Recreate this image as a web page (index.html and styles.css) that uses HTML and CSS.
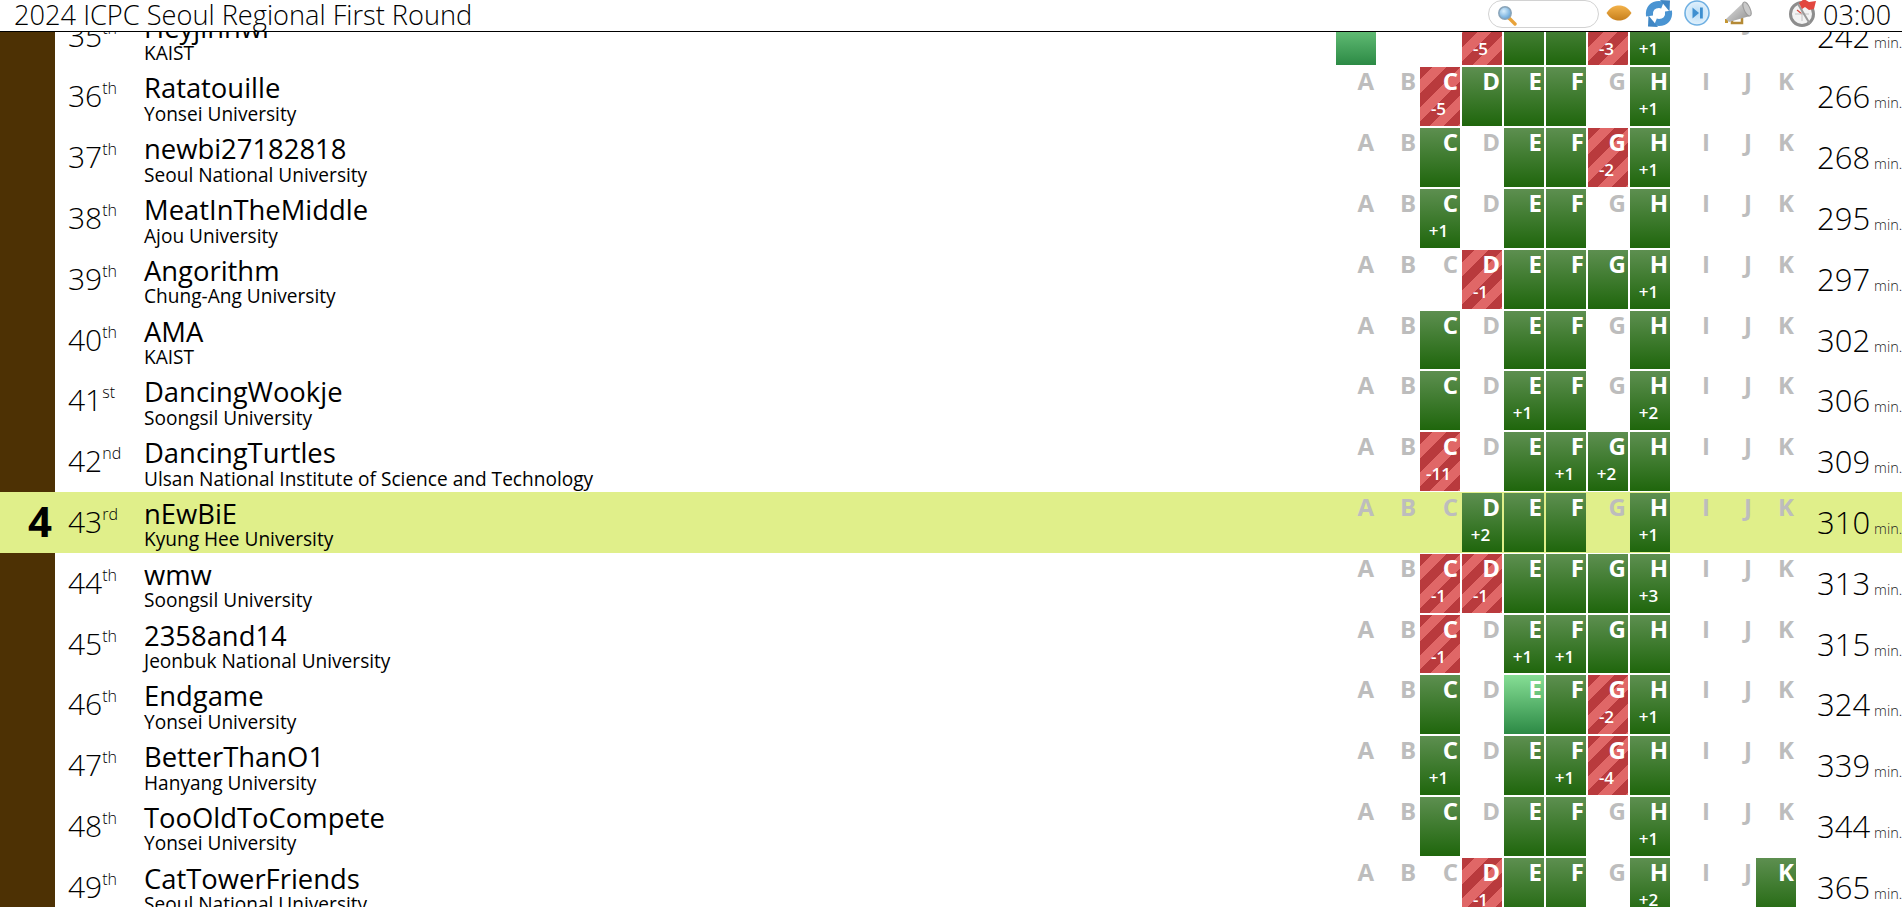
FILE: index.html
```html
<!DOCTYPE html>
<html lang="en">
<head>
<meta charset="utf-8">
<title>2024 ICPC Seoul Regional First Round</title>
<link rel="stylesheet" href="styles.css">
</head>
<body>
<header class="topbar">
  <h1 class="title">2024 ICPC Seoul Regional First Round</h1>
  <div class="tools">
    <div class="search">
      <svg width="20" height="24" viewBox="0 0 20 24"><defs><radialGradient id="lens" cx=".4" cy=".35" r=".7"><stop offset="0" stop-color="#d8eefc"/><stop offset="1" stop-color="#5b9fd6"/></radialGradient></defs><path d="M12 15l6 6" stroke="#e9a33a" stroke-width="3.4" stroke-linecap="round"/><circle cx="8" cy="10" r="6.2" fill="url(#lens)" stroke="#8aa4b8" stroke-width="1.5"/></svg>
    </div>
    <svg class="ico-seed" width="26" height="16" viewBox="0 0 26 16"><defs><linearGradient id="seed" x1="0" y1="0" x2="0" y2="1"><stop offset="0" stop-color="#f3b24a"/><stop offset="1" stop-color="#c67f1c"/></linearGradient></defs><path d="M0.5 8C5 1.5 9 .5 13 .5S21 1.500 25.500 8C21 14.500 17 15.500 13 15.500S5 14.500 .5 8Z" fill="url(#seed)"/></svg>
    <svg class="ico-refresh" width="28" height="27" viewBox="0 0 28 27"><g fill="none" stroke="#4a94d2" stroke-width="7"><path d="M4.500 16C3.500 8.500 8 4.500 14 4.500c1.500 0 2.500.3 3.500.7"/><path d="M23.500 11c1 7.500-3.500 11.500-9.500 11.500-1.500 0-2.500-.3-3.500-.7"/></g><path d="M15 0L25 .5l-.5 11Z" fill="#3f86c4"/><path d="M13 27L3 26.500l.5-11Z" fill="#3f86c4"/></svg>
    <svg class="ico-next" width="26" height="26" viewBox="0 0 26 26"><defs><radialGradient id="btn" cx=".5" cy=".5" r=".6"><stop offset="0" stop-color="#b7dcf6"/><stop offset="1" stop-color="#eaf5fd"/></radialGradient></defs><circle cx="13" cy="13" r="12" fill="url(#btn)" stroke="#6fb0e2" stroke-width="1.600"/><path d="M8.500 7.500L15 13l-6.500 5.500Z" fill="#3e8fd0"/><rect x="16" y="7.500" width="2.800" height="11" fill="#3e8fd0"/></svg>
    <svg class="ico-horn" width="28" height="26" viewBox="0 0 28 26"><defs><linearGradient id="horn" x1="0" y1="0" x2="1" y2="1"><stop offset="0" stop-color="#e6e6e6"/><stop offset="1" stop-color="#8f8f8f"/></linearGradient></defs><path d="M8 20v3h10v-5" fill="none" stroke="#b58a35" stroke-width="2.500"/><path d="M1 21h3" stroke="#c49632" stroke-width="4"/><path d="M2 19L20 2l6 14L5 22Z" fill="url(#horn)"/><ellipse cx="23" cy="9" rx="3" ry="7.500" transform="rotate(-24 23 9)" fill="#c9c9c9" stroke="#9a9a9a"/></svg>
    <svg class="ico-clock" width="28" height="28" viewBox="0 0 28 28"><circle cx="13" cy="15" r="11.500" fill="#f3f3f3" stroke="#8d8d8d" stroke-width="3"/><path d="M13 15L8 11" stroke="#d8453a" stroke-width="1.200"/><path d="M13 8v14M6 15h14" stroke="#c4c4c4"/><path d="M9 5l12 20" stroke="#9a9a9a" stroke-width="2"/><path d="M10 4L15 0l5 3 7-1-2 8-5 1-4-3-3 2Z" fill="#e2473f"/></svg>
    <span class="clock">03:00</span>
  </div>
</header>
<main class="board">
  <div class="list">
    <div class="row"><div class="medal"></div><div class="place">35<sup>th</sup></div><div class="team"><div class="name">Heyjinhwi</div><div class="univ">KAIST</div></div>
      <div class="probs"><div class="p new"><b>A</b></div><div class="p"><b>B</b></div><div class="p"><b>C</b></div><div class="p fail"><b>D</b><i>-5</i></div><div class="p ok"><b>E</b></div><div class="p ok"><b>F</b></div><div class="p fail"><b>G</b><i>-3</i></div><div class="p ok"><b>H</b><i>+1</i></div><div class="p"><b>I</b></div><div class="p"><b>J</b></div><div class="p"><b>K</b></div></div>
      <div class="score">242<small>min.</small></div></div>
    <div class="row"><div class="medal"></div><div class="place">36<sup>th</sup></div><div class="team"><div class="name">Ratatouille</div><div class="univ">Yonsei University</div></div>
      <div class="probs"><div class="p"><b>A</b></div><div class="p"><b>B</b></div><div class="p fail"><b>C</b><i>-5</i></div><div class="p ok"><b>D</b></div><div class="p ok"><b>E</b></div><div class="p ok"><b>F</b></div><div class="p"><b>G</b></div><div class="p ok"><b>H</b><i>+1</i></div><div class="p"><b>I</b></div><div class="p"><b>J</b></div><div class="p"><b>K</b></div></div>
      <div class="score">266<small>min.</small></div></div>
    <div class="row"><div class="medal"></div><div class="place">37<sup>th</sup></div><div class="team"><div class="name">newbi27182818</div><div class="univ">Seoul National University</div></div>
      <div class="probs"><div class="p"><b>A</b></div><div class="p"><b>B</b></div><div class="p ok"><b>C</b></div><div class="p"><b>D</b></div><div class="p ok"><b>E</b></div><div class="p ok"><b>F</b></div><div class="p fail"><b>G</b><i>-2</i></div><div class="p ok"><b>H</b><i>+1</i></div><div class="p"><b>I</b></div><div class="p"><b>J</b></div><div class="p"><b>K</b></div></div>
      <div class="score">268<small>min.</small></div></div>
    <div class="row"><div class="medal"></div><div class="place">38<sup>th</sup></div><div class="team"><div class="name">MeatInTheMiddle</div><div class="univ">Ajou University</div></div>
      <div class="probs"><div class="p"><b>A</b></div><div class="p"><b>B</b></div><div class="p ok"><b>C</b><i>+1</i></div><div class="p"><b>D</b></div><div class="p ok"><b>E</b></div><div class="p ok"><b>F</b></div><div class="p"><b>G</b></div><div class="p ok"><b>H</b></div><div class="p"><b>I</b></div><div class="p"><b>J</b></div><div class="p"><b>K</b></div></div>
      <div class="score">295<small>min.</small></div></div>
    <div class="row"><div class="medal"></div><div class="place">39<sup>th</sup></div><div class="team"><div class="name">Angorithm</div><div class="univ">Chung-Ang University</div></div>
      <div class="probs"><div class="p"><b>A</b></div><div class="p"><b>B</b></div><div class="p"><b>C</b></div><div class="p fail"><b>D</b><i>-1</i></div><div class="p ok"><b>E</b></div><div class="p ok"><b>F</b></div><div class="p ok"><b>G</b></div><div class="p ok"><b>H</b><i>+1</i></div><div class="p"><b>I</b></div><div class="p"><b>J</b></div><div class="p"><b>K</b></div></div>
      <div class="score">297<small>min.</small></div></div>
    <div class="row"><div class="medal"></div><div class="place">40<sup>th</sup></div><div class="team"><div class="name">AMA</div><div class="univ">KAIST</div></div>
      <div class="probs"><div class="p"><b>A</b></div><div class="p"><b>B</b></div><div class="p ok"><b>C</b></div><div class="p"><b>D</b></div><div class="p ok"><b>E</b></div><div class="p ok"><b>F</b></div><div class="p"><b>G</b></div><div class="p ok"><b>H</b></div><div class="p"><b>I</b></div><div class="p"><b>J</b></div><div class="p"><b>K</b></div></div>
      <div class="score">302<small>min.</small></div></div>
    <div class="row"><div class="medal"></div><div class="place">41<sup>st</sup></div><div class="team"><div class="name">DancingWookje</div><div class="univ">Soongsil University</div></div>
      <div class="probs"><div class="p"><b>A</b></div><div class="p"><b>B</b></div><div class="p ok"><b>C</b></div><div class="p"><b>D</b></div><div class="p ok"><b>E</b><i>+1</i></div><div class="p ok"><b>F</b></div><div class="p"><b>G</b></div><div class="p ok"><b>H</b><i>+2</i></div><div class="p"><b>I</b></div><div class="p"><b>J</b></div><div class="p"><b>K</b></div></div>
      <div class="score">306<small>min.</small></div></div>
    <div class="row"><div class="medal"></div><div class="place">42<sup>nd</sup></div><div class="team"><div class="name">DancingTurtles</div><div class="univ">Ulsan National Institute of Science and Technology</div></div>
      <div class="probs"><div class="p"><b>A</b></div><div class="p"><b>B</b></div><div class="p fail"><b>C</b><i>-11</i></div><div class="p"><b>D</b></div><div class="p ok"><b>E</b></div><div class="p ok"><b>F</b><i>+1</i></div><div class="p ok"><b>G</b><i>+2</i></div><div class="p ok"><b>H</b></div><div class="p"><b>I</b></div><div class="p"><b>J</b></div><div class="p"><b>K</b></div></div>
      <div class="score">309<small>min.</small></div></div>
    <div class="row mine"><div class="medal">4</div><div class="place">43<sup>rd</sup></div><div class="team"><div class="name">nEwBiE</div><div class="univ">Kyung Hee University</div></div>
      <div class="probs"><div class="p"><b>A</b></div><div class="p"><b>B</b></div><div class="p"><b>C</b></div><div class="p ok"><b>D</b><i>+2</i></div><div class="p ok"><b>E</b></div><div class="p ok"><b>F</b></div><div class="p"><b>G</b></div><div class="p ok"><b>H</b><i>+1</i></div><div class="p"><b>I</b></div><div class="p"><b>J</b></div><div class="p"><b>K</b></div></div>
      <div class="score">310<small>min.</small></div></div>
    <div class="row"><div class="medal"></div><div class="place">44<sup>th</sup></div><div class="team"><div class="name">wmw</div><div class="univ">Soongsil University</div></div>
      <div class="probs"><div class="p"><b>A</b></div><div class="p"><b>B</b></div><div class="p fail"><b>C</b><i>-1</i></div><div class="p fail"><b>D</b><i>-1</i></div><div class="p ok"><b>E</b></div><div class="p ok"><b>F</b></div><div class="p ok"><b>G</b></div><div class="p ok"><b>H</b><i>+3</i></div><div class="p"><b>I</b></div><div class="p"><b>J</b></div><div class="p"><b>K</b></div></div>
      <div class="score">313<small>min.</small></div></div>
    <div class="row"><div class="medal"></div><div class="place">45<sup>th</sup></div><div class="team"><div class="name">2358and14</div><div class="univ">Jeonbuk National University</div></div>
      <div class="probs"><div class="p"><b>A</b></div><div class="p"><b>B</b></div><div class="p fail"><b>C</b><i>-1</i></div><div class="p"><b>D</b></div><div class="p ok"><b>E</b><i>+1</i></div><div class="p ok"><b>F</b><i>+1</i></div><div class="p ok"><b>G</b></div><div class="p ok"><b>H</b></div><div class="p"><b>I</b></div><div class="p"><b>J</b></div><div class="p"><b>K</b></div></div>
      <div class="score">315<small>min.</small></div></div>
    <div class="row"><div class="medal"></div><div class="place">46<sup>th</sup></div><div class="team"><div class="name">Endgame</div><div class="univ">Yonsei University</div></div>
      <div class="probs"><div class="p"><b>A</b></div><div class="p"><b>B</b></div><div class="p ok"><b>C</b></div><div class="p"><b>D</b></div><div class="p new"><b>E</b></div><div class="p ok"><b>F</b></div><div class="p fail"><b>G</b><i>-2</i></div><div class="p ok"><b>H</b><i>+1</i></div><div class="p"><b>I</b></div><div class="p"><b>J</b></div><div class="p"><b>K</b></div></div>
      <div class="score">324<small>min.</small></div></div>
    <div class="row"><div class="medal"></div><div class="place">47<sup>th</sup></div><div class="team"><div class="name">BetterThanO1</div><div class="univ">Hanyang University</div></div>
      <div class="probs"><div class="p"><b>A</b></div><div class="p"><b>B</b></div><div class="p ok"><b>C</b><i>+1</i></div><div class="p"><b>D</b></div><div class="p ok"><b>E</b></div><div class="p ok"><b>F</b><i>+1</i></div><div class="p fail"><b>G</b><i>-4</i></div><div class="p ok"><b>H</b></div><div class="p"><b>I</b></div><div class="p"><b>J</b></div><div class="p"><b>K</b></div></div>
      <div class="score">339<small>min.</small></div></div>
    <div class="row"><div class="medal"></div><div class="place">48<sup>th</sup></div><div class="team"><div class="name">TooOldToCompete</div><div class="univ">Yonsei University</div></div>
      <div class="probs"><div class="p"><b>A</b></div><div class="p"><b>B</b></div><div class="p ok"><b>C</b></div><div class="p"><b>D</b></div><div class="p ok"><b>E</b></div><div class="p ok"><b>F</b></div><div class="p"><b>G</b></div><div class="p ok"><b>H</b><i>+1</i></div><div class="p"><b>I</b></div><div class="p"><b>J</b></div><div class="p"><b>K</b></div></div>
      <div class="score">344<small>min.</small></div></div>
    <div class="row"><div class="medal"></div><div class="place">49<sup>th</sup></div><div class="team"><div class="name">CatTowerFriends</div><div class="univ">Seoul National University</div></div>
      <div class="probs"><div class="p"><b>A</b></div><div class="p"><b>B</b></div><div class="p"><b>C</b></div><div class="p fail"><b>D</b><i>-1</i></div><div class="p ok"><b>E</b></div><div class="p ok"><b>F</b></div><div class="p"><b>G</b></div><div class="p ok"><b>H</b><i>+2</i></div><div class="p"><b>I</b></div><div class="p"><b>J</b></div><div class="p ok"><b>K</b></div></div>
      <div class="score">365<small>min.</small></div></div>
  </div>
</main>
</body>
</html>
```
FILE: styles.css
```css
html, body {
  margin: 0;
  padding: 0;
  height: 100%;
  overflow: hidden;
  background: #fff;
  font-family: "Open Sans", "Noto Sans", sans-serif;
  color: #000;
}
body {
  display: flex;
  flex-direction: column;
}
.topbar {
  flex: none;
  height: 31px;
  border-bottom: 1px solid #000;
  display: flex;
  justify-content: space-between;
  align-items: center;
  padding: 0 0 0 14px;
  background: #fff;
}
.title {
  margin: 0;
  font-size: 27.2px;
  font-weight: 300;
  line-height: 31px;
  margin-top: -3px;
  white-space: nowrap;
  color: #000;
}
.tools {
  display: flex;
  align-items: center;
  height: 31px;
  width: 414px;
}
.search {
  box-sizing: border-box;
  width: 111px;
  height: 28px;
  margin-top: -3px;
  border: 1px solid #d2d2d2;
  border-radius: 14px;
  padding: 2px 0 0 8px;
  display: flex;
  align-items: center;
}
.ico-seed { margin: -6px 0 0 7px; }
.ico-refresh { margin: -5px 0 0 13px; }
.ico-next { margin: -5px 0 0 11px; }
.ico-horn { margin: -6px 0 0 14px; }
.ico-clock { margin: -5px 0 0 37px; }
.clock {
  font-size: 27px;
  font-weight: 300;
  line-height: 31px;
  margin: -3px 0 0 6px;
  color: #000;
}
.board {
  flex: 1;
  min-height: 0;
  overflow: hidden;
}
.list {
  margin-top: -26.4px;
}
.row {
  height: 60.8px;
  display: flex;
}
.mine {
  background: #e0ef8a;
}
.medal {
  flex: none;
  box-sizing: border-box;
  width: 55px;
  background: #4d3104;
  text-align: right;
  padding-right: 3px;
  font-size: 42px;
  font-weight: 700;
  line-height: 58px;
}
.mine .medal {
  background: transparent;
}
.place {
  flex: none;
  box-sizing: border-box;
  width: 89px;
  padding: 11px 0 0 13px;
  font-size: 30px;
  font-weight: 300;
  line-height: 38px;
  color: #000;
}
.place sup {
  font-size: 16px;
  line-height: 0;
  vertical-align: 13px;
}
.team {
  flex: 1;
  min-width: 0;
  padding-top: 5px;
}
.name {
  font-size: 27.4px;
  line-height: 33px;
  color: #000;
  white-space: nowrap;
}
.univ {
  font-size: 19.1px;
  line-height: 19px;
  margin-top: 0.5px;
  white-space: nowrap;
}
.probs {
  flex: none;
  display: flex;
  gap: 2px;
}
.p {
  box-sizing: border-box;
  width: 40px;
  height: 58.8px;
  margin-top: 1px;
  padding-right: 2px;
  display: flex;
  flex-direction: column;
}
.p b {
  display: block;
  text-align: right;
  font-size: 24px;
  font-weight: 700;
  line-height: 30px;
  margin-top: -1px;
  color: #bdbdbd;
}
.p i {
  display: block;
  font-style: normal;
  text-align: center;
  font-size: 17px;
  font-weight: 600;
  line-height: 20px;
  margin-top: 3px;
  padding-right: 1px;
  color: #fff;
}
.ok {
  background: linear-gradient(#5d8f50, #1f660c);
}
.new {
  background: linear-gradient(#86de95, #2c8a45);
}
.fail {
  background: repeating-linear-gradient(135deg, #b93a3d -1.5px, #b93a3d 8.5px, #e06767 8.5px, #e06767 18.5px);
}
.ok b, .new b, .fail b {
  color: #fff;
}
.score {
  flex: none;
  box-sizing: border-box;
  width: 106px;
  padding: 11px 0 0 21px;
  font-size: 31px;
  font-weight: 300;
  line-height: 38px;
  white-space: nowrap;
  color: #000;
}
.score small {
  font-size: 14.5px;
  margin-left: 4px;
  color: #222;
}
```
